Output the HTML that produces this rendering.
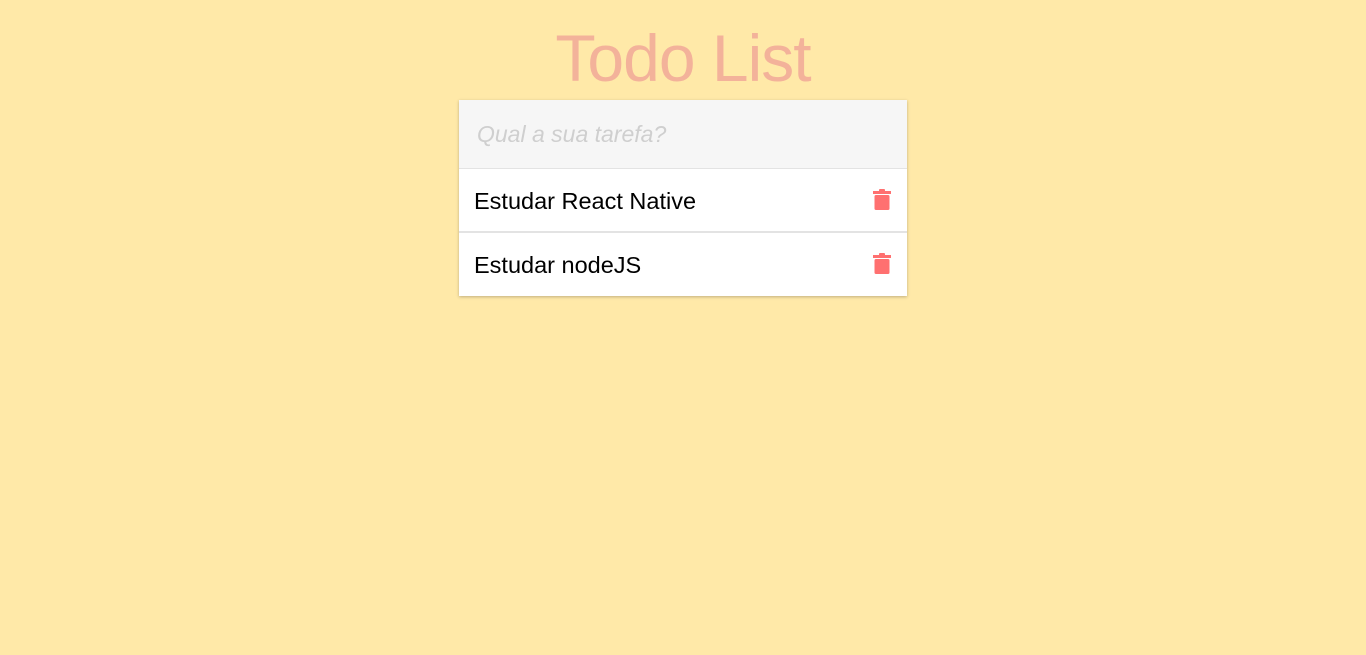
<!DOCTYPE html>
<html><head><style>
body{margin:0;background:#ffe9a8;font-family:"Liberation Sans",sans-serif;width:1366px;height:655px;overflow:hidden}
h1{margin:0;position:absolute;top:18px;left:0;width:1366px;text-align:center;font-weight:300;font-size:66px;line-height:80px;color:#f3b29a;letter-spacing:-1px}
.card{position:absolute;left:459px;top:100px;width:448px;background:#fff;box-shadow:0 1px 3px rgba(0,0,0,.25)}
.inp{height:68px;background:#f6f6f6;border-bottom:1px solid #e3e3e3;font-style:italic;color:#cfcfcf;font-size:23px;line-height:68px;padding-left:18px}
.row{height:62px;border-bottom:2px solid #e3e3e3;position:relative;font-size:23.5px;line-height:64px;padding-left:15px;color:#000}
.row:last-child{border-bottom:none;height:63px}
.row svg{position:absolute;right:16px;top:19px}
</style></head><body>
<h1>Todo List</h1>
<div class="card">
<div class="inp">Qual a sua tarefa?</div>
<div class="row">Estudar React Native<svg width="18" height="22" viewBox="0 0 18 22"><rect x="0" y="3" width="18" height="3" fill="#ff7070"/><rect x="6" y="1" width="6" height="3" rx="1" fill="#ff7070"/><rect x="1.5" y="7" width="15" height="15" rx="1.5" fill="#ff7070"/></svg></div>
<div class="row">Estudar nodeJS<svg width="18" height="22" viewBox="0 0 18 22"><rect x="0" y="3" width="18" height="3" fill="#ff7070"/><rect x="6" y="1" width="6" height="3" rx="1" fill="#ff7070"/><rect x="1.5" y="7" width="15" height="15" rx="1.5" fill="#ff7070"/></svg></div>
</div>
</body></html>
